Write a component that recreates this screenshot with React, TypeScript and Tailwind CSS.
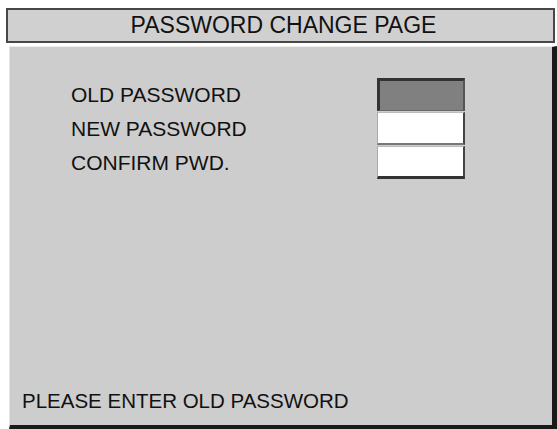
import React from "react";

const FIELDS = [
  { label: "OLD PASSWORD", box: "bg-[#808080] border-t-[3px] border-l-[3px] border-r-2 border-b border-t-[#333] border-l-[#333] border-r-[#555] border-b-[#666]" },
  { label: "NEW PASSWORD", box: "bg-white border-t border-l border-r-2 border-b-2 border-t-[#bbb] border-l-[#aaa] border-r-[#444] border-b-[#777]" },
  { label: "CONFIRM PWD.", box: "bg-white border-t border-l border-r-2 border-b-[3px] border-t-[#bbb] border-l-[#aaa] border-r-[#444] border-b-[#333]" },
];

export default function App() {
  return (
    <div
      className="w-[557px] h-[429px] bg-white flex flex-col text-[#111]"
      style={{ fontFamily: '"Liberation Sans", Arial, sans-serif' }}
    >
      {/* Title bar */}
      <div className="ml-[6px] mt-[8px] w-[549px] h-[35px] bg-[#d0d0d0] border-2 border-[#474747] flex items-center justify-center pl-[6px]">
        <span className="text-[23px] leading-none">PASSWORD CHANGE PAGE</span>
      </div>

      {/* Main panel */}
      <div className="ml-[9px] mt-[3px] flex-1 bg-[#cdcdcd] border-t border-l border-t-[#ececec] border-l-[#e4e4e4] border-r-[5px] border-b-[4px] border-r-[#1a1a1a] border-b-[#1a1a1a] flex flex-col">
        <div className="pt-[31px] pl-[61px] flex flex-col gap-[1px]">
          {FIELDS.map((f) => (
            <div key={f.label} className="h-[33px] flex items-center">
              <span className="w-[306px] text-[21px] leading-none">{f.label}</span>
              <div className={`w-[88px] h-[33px] ${f.box}`} />
            </div>
          ))}
        </div>

        <div className="mt-auto pl-[12px] pb-[12px] text-[20.5px] leading-[24px]">
          PLEASE ENTER OLD PASSWORD
        </div>
      </div>
    </div>
  );
}
